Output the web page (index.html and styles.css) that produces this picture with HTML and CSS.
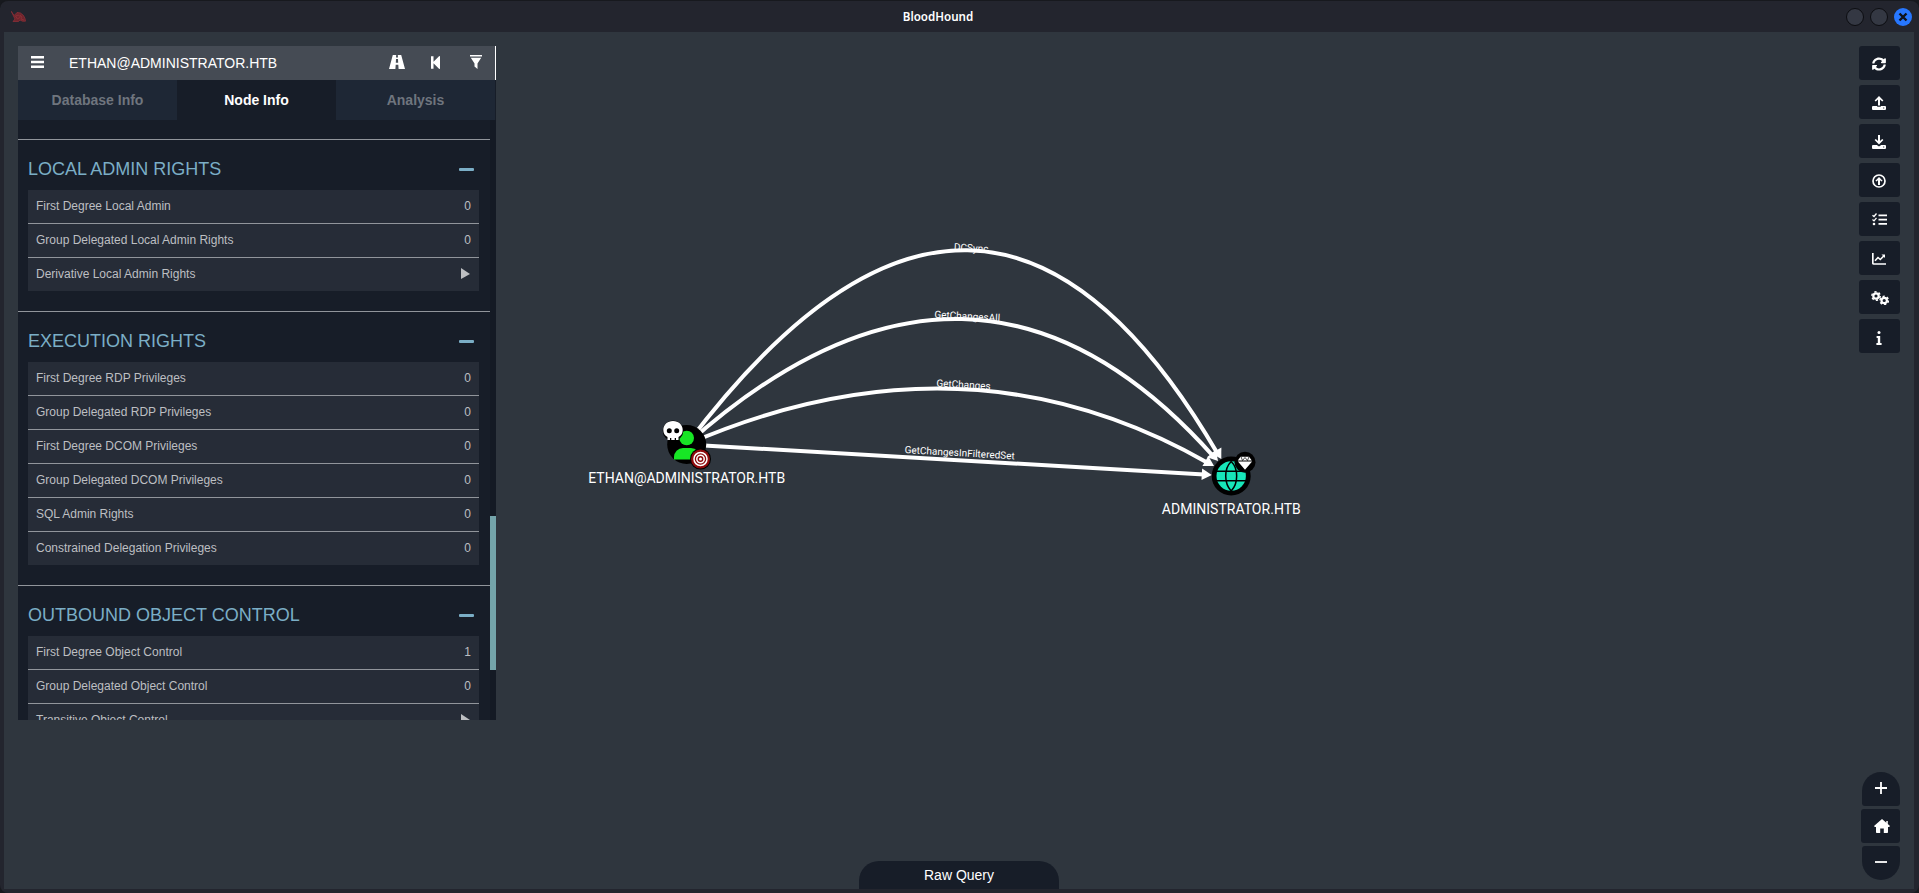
FILE: index.html
```html
<!DOCTYPE html>
<html lang="en">
<head>
<meta charset="utf-8">
<title>BloodHound</title>
<link rel="stylesheet" href="styles.css">
</head>
<body>
<div class="window">
  <header class="titlebar">
    <svg class="app-icon" viewBox="0 0 15 12" width="15" height="12"><path fill="#6e252c" d="M.3.3 1.500 2.500 3.500 4.200 6 1.500l3.500.5 3 2.500 1.500 3 .5 2.700h-3L9 9 7.500 10.500H2L4 8 2.500 5z"/><path d="M4.500 5l3-1 2 2-3 2zM9 4l2 2-1 2 3 1"/></svg>
    <span class="title">BloodHound</span>
    <div class="window-buttons">
      <i></i><i></i><i class="close"><svg viewBox="0 0 18 18" width="18" height="18"><path d="M5.500 5.500l7 7M12.500 5.500l-7 7"/></svg></i>
    </div>
  </header>
  <main class="canvas">
    <svg class="graph" viewBox="4 32 1910 857" width="1910" height="857">
      <g class="edges">
        <path d="M686.700 444.500Q983 51 1218 454.300"/>
        <path d="M686.700 444.500Q973.500 187.500 1213.500 456.500"/>
        <path d="M686.700 444.500Q964 324 1208 463"/>
        <path d="M686.700 444.500 1204 474.500"/>
      </g>
      <g class="arrows">
        <path transform="translate(1221.300 459)rotate(60.200)" d="M0 0-10-5.800V5.800z"/>
        <path transform="translate(1218 461)rotate(49)" d="M0 0-10-5.800V5.800z"/>
        <path transform="translate(1214 466)rotate(30.400)" d="M0 0-10-5.800V5.800z"/>
        <path transform="translate(1211.800 474.900)rotate(3.300)" d="M0 0-10-5.800V5.800z"/>
      </g>
      <g class="edge-labels">
        <text transform="translate(971 251.300)rotate(3.300)">DCSync</text>
        <text transform="translate(967 319.600)rotate(3.300)">GetChangesAll</text>
        <text transform="translate(963.300 388)rotate(3.300)">GetChanges</text>
        <text transform="translate(959.500 456.200)rotate(3.300)">GetChangesInFilteredSet</text>
      </g>
      <g>
        <circle cx="686.700" cy="444.500" r="19.500"/>
        <circle cx="686.700" cy="438" r="7.300" fill="#17e625"/>
        <path d="M674 459.500v-2.500a9 9 0 0 1 9-9h8a9 9 0 0 1 9 9v2.500z" fill="#17e625"/>
        <circle cx="673" cy="430.700" r="10.300"/>
        <path fill="#fff" d="M673 421c-5.800 0-9.700 3.900-9.700 8.900 0 3.100 1.500 5.600 4.200 7.100v3h2.500v-2h1.300v2h3.400v-2h1.300v2h2.500v-3c2.700-1.500 4.200-4 4.200-7.100 0-5-3.900-8.900-9.700-8.900z"/>
        <circle cx="669.300" cy="430.700" r="2.500"/><circle cx="676.700" cy="430.700" r="2.500"/>
        <circle cx="700.500" cy="459" r="10.500"/>
        <circle cx="700.500" cy="459" r="9.500" fill="#8e0a0c"/>
        <g fill="none" stroke="#fff" stroke-width="1.500"><circle cx="700.500" cy="459" r="6.500"/><circle cx="700.500" cy="459" r="3.700"/></g>
        <circle cx="700.500" cy="459" r="1.500" fill="#fff"/>
      </g>
      <g>
        <circle cx="1231.200" cy="476" r="19.500"/>
        <circle cx="1231.200" cy="476" r="14.700" fill="#17e6b9"/>
        <path d="M1216 471.200h30.500M1216 480.800h30.500M1231.200 461.500c-7.300 7-7.300 22 0 29.500M1231.200 461.500c7.300 7 7.300 22 0 29.500" fill="none" stroke="#000" stroke-width="1.500"/>
        <circle cx="1245" cy="462.200" r="10.500"/>
        <path d="M1240.500 456.800h8.600l2.700 3.700h-14zM1237.900 461.600h14.200l-7.100 8.200z" fill="#fff"/>
        <path d="M1241 456.800l1.500 3.700 2.500-3 2.500 3 1.500-3.700" fill="none" stroke="#000" stroke-width=".7"/>
      </g>
      <g class="node-labels">
        <text x="686.700" y="483.200" textLength="197">ETHAN@ADMINISTRATOR.HTB</text>
        <text x="1231.300" y="514" textLength="139">ADMINISTRATOR.HTB</text>
      </g>
    </svg>

    <aside class="panel">
      <div class="search">
        <svg class="menu" viewBox="0 0 13 12" width="13" height="12"><path d="M0 0h13v2.500H0zM0 4.700h13v2.500H0zM0 9.500h13V12H0z"/></svg>
        <span class="query">ETHAN@ADMINISTRATOR.HTB</span>
        <svg class="road" viewBox="0 0 16 14" width="16" height="14"><path d="M3.800 0H7.200L7 2.500H9L8.800 0h3.400L16 14H9.600L9.300 9.800H6.700L6.400 14H0zM7 4 6.800 7.800h2.400L9 4z"/></svg>
        <svg class="back" viewBox="0 0 9 13" width="9" height="13"><path d="M0 .3h2.500v5.500L8 .3Q9-.3 9 .8v11.400q0 1.100-1 .5L2.500 7.200v5.500H0z"/></svg>
        <svg class="filter" viewBox="0 0 12 14" width="12" height="14"><path d="M0 0h12v1.600H0zM.8 2.700h10.400L7.500 8.500V14L4.500 11.500v-3z"/></svg>
      </div>
      <nav class="tabs"><span>Database Info</span><span class="active">Node Info</span><span>Analysis</span></nav>
      <div class="scroll">
        <div class="sections">
          <section>
            <h4>LOCAL ADMIN RIGHTS <i></i></h4>
            <ul>
              <li>First Degree Local Admin<b>0</b></li>
              <li>Group Delegated Local Admin Rights<b>0</b></li>
              <li>Derivative Local Admin Rights<i class="play"></i></li>
            </ul>
          </section>
          <section>
            <h4>EXECUTION RIGHTS <i></i></h4>
            <ul>
              <li>First Degree RDP Privileges<b>0</b></li>
              <li>Group Delegated RDP Privileges<b>0</b></li>
              <li>First Degree DCOM Privileges<b>0</b></li>
              <li>Group Delegated DCOM Privileges<b>0</b></li>
              <li>SQL Admin Rights<b>0</b></li>
              <li>Constrained Delegation Privileges<b>0</b></li>
            </ul>
          </section>
          <section>
            <h4>OUTBOUND OBJECT CONTROL <i></i></h4>
            <ul>
              <li>First Degree Object Control<b>1</b></li>
              <li>Group Delegated Object Control<b>0</b></li>
              <li>Transitive Object Control<i class="play"></i></li>
            </ul>
          </section>
        </div>
        <div class="track"><div class="thumb"></div></div>
      </div>
    </aside>

    <div class="raw-query">Raw Query</div>

    <div class="side">
      <div class="tools">
        <button><svg viewBox="0 0 512 512" width="14" height="14"><path d="M371 142c-31-30-71-46-115-46-79 0-147 54-166 129-1 5-6 9-12 9H21c-8 0-13-7-12-14C30 104 133 16 256 16c67 0 129 26 175 70l36-36c15-15 41-5 41 17v133c0 13-11 24-24 24H351c-22 0-32-26-17-41zM28 288h133c22 0 32 26 17 41l-37 41c31 30 71 46 115 46 79 0 147-54 166-129 1-5 6-9 12-9h57c8 0 13 7 12 14-21 116-124 204-247 204-67 0-129-26-175-70l-36 36c-15 15-41 5-41-17V312c0-13 11-24 24-24z"/></svg></button>
        <button><svg viewBox="0 0 14 14" width="14" height="14"><path fill-rule="evenodd" d="M6 9.500v-6L3.800 5.600 2.600 4.400 7 0l4.400 4.400-1.200 1.200L8 3.500v6zM1 10h4.200v.8h3.600V10H13q1 0 1 1v2q0 1-1 1H1q-1 0-1-1v-2q0-1 1-1zM11.200 11.500v1h1v-1z"/></svg></button>
        <button><svg viewBox="0 0 14 14" width="14" height="14"><path fill-rule="evenodd" d="M6 0h2v6l2.200-2.100 1.200 1.200L7 9.500 2.600 5.100l1.200-1.200L6 6zM1 10h3.800L7 11.500 9.200 10H13q1 0 1 1v2q0 1-1 1H1q-1 0-1-1v-2q0-1 1-1zM11.200 11.500v1h1v-1z"/></svg></button>
        <button><svg viewBox="0 0 14 14" width="14" height="14"><circle cx="7" cy="7" r="6" fill="none" stroke="#fff" stroke-width="1.700"/><path d="M7 3l3.600 3.700-1 .9L8 6.300V11H6V6.300L4.400 7.600l-1-.9z"/></svg></button>
        <button><svg viewBox="0 0 15 13" width="15" height="13"><path d="M6.500 1.500H15v1.800H6.500zM6.500 5.700H15v1.800H6.500zM6.500 10H15v1.800H6.500z"/><circle cx="2" cy="11" r="1.300"/><path d="M.5 2.200 2 3.500 4.500.5M.5 6.600 2 7.900l2.500-3" fill="none" stroke="#fff" stroke-width="1.300"/></svg></button>
        <button><svg class="chart" viewBox="0 0 14 12" width="14" height="12"><path d="M.8 0v10q0 1 1 1H14" fill="none" stroke="#fff" stroke-width="1.700"/><path d="M3 7.800 6 4.500l2.300 2L12 2.800" fill="none" stroke="#fff" stroke-width="1.600"/><path d="M9.500 1.500H13V5z"/></svg></button>
        <button><svg class="cogs" viewBox="0 0 18 14" width="18" height="14"><g fill="none" stroke="#fff"><circle cx="5" cy="5" r="2.700" stroke-width="2.200"/><circle cx="5" cy="5" r="4.200" stroke-width="1.500" stroke-dasharray="2.200 2.198"/><circle cx="13.200" cy="9.500" r="2.700" stroke-width="2.200"/><circle cx="13.200" cy="9.500" r="4.200" stroke-width="1.500" stroke-dasharray="2.200 2.198"/></g></svg></button>
        <button><svg class="info" viewBox="0 0 6 14" width="6" height="14"><circle cx="3" cy="1.500" r="1.500"/><path d="M.6 5H4.200v7H5.600v2H.4v-2H1.800V7H.6z"/></svg></button>
      </div>
      <div class="zoom">
        <button class="in"><svg viewBox="0 0 12 12" width="12" height="12"><path d="M5.100 0h1.800v5.100H12v1.800H6.900V12H5.100V6.900H0V5.100h5.100z"/></svg></button>
        <button class="home"><svg viewBox="0 0 16 14" width="16" height="14"><path d="M8 0l4.300 3.700V2h1.500v3L16 7l-.8 1H14v5.200q0 .8-.8.800H9.800V9.500H6.200V14H2.800Q2 14 2 13.200V8H.8L0 7z"/></svg></button>
        <button class="out"><svg viewBox="0 0 12 12" width="12" height="12"><path d="M0 5.100h12v1.800H0z"/></svg></button>
      </div>
    </div>
  </main>
</div>
</body>
</html>
```
FILE: styles.css
```css
* { box-sizing: border-box; }
body {
  margin: 0;
  background: #17191e;
  font-family: "Liberation Sans", Arial, sans-serif;
  overflow: hidden;
}
.window {
  width: 1919px;
  height: 893px;
  padding: 2px 5px 4px 4px;
  background: #23252e;
  border-top: 1px solid #17191e;
  border-radius: 8px;
  display: flex;
  flex-direction: column;
}
.titlebar {
  height: 29px;
  display: grid;
  grid-template-columns: 1fr auto 1fr;
  align-items: center;
}
.app-icon { margin: -1px 0 0 7px; fill: none; stroke: #94303a; stroke-width: .7; }
.title {
  font: 600 11.6px/20px "Noto Sans", sans-serif;
  color: #fff;
  padding-right: 42px;
  margin-top: -1px;
}
.window-buttons { display: flex; gap: 6px; justify-content: flex-end; padding-right: 2px; margin-top: -1px; }
.window-buttons i {
  width: 18px;
  height: 18px;
  border-radius: 50%;
  background: #343843;
  border: 1px solid #0c0d11;
}
.window-buttons .close { background: #2777ff; border: 0; }
.close svg { display: block; stroke: #10131c; stroke-width: 2.4; }

.canvas {
  position: relative;
  flex: 1;
  background: #2f363e;
  display: grid;
  grid-template-columns: 478px 1fr auto;
  padding: 14px 14px 0;
}
.graph { position: absolute; left: 0; top: 0; }
.edges { fill: none; stroke: #fff; stroke-width: 4; }
.arrows { fill: #fff; }
.edge-labels, .node-labels { font-family: Roboto, sans-serif; fill: #fff; text-anchor: middle; }
.edge-labels { font-size: 10px; }
.node-labels { font-size: 14px; }

.panel {
  position: relative;
  height: 674px;
  background: #171d28;
  display: flex;
  flex-direction: column;
}
.search {
  height: 34px;
  background: #454b54;
  border-right: 1px solid #fff;
  display: flex;
  align-items: center;
  padding: 0 13px 2px 13px;
  color: #fff;
  font-size: 14px;
}
.search svg { fill: #fff; display: block; }
.query { flex: 1; padding: 1px 0 0 25px; }
.road { margin-right: 26px; }
.back { margin-right: 30px; }
.tabs { display: flex; height: 40px; padding-right: 1px; }
.tabs span {
  flex: 1;
  background: #1e2735;
  color: #6f757e;
  font: bold 14px/40px "Liberation Sans", Arial, sans-serif;
  text-align: center;
}
.tabs .active { background: #171d28; color: #fff; }
.scroll { display: flex; flex: 1; min-height: 0; overflow: hidden; }
.sections { flex: 1; padding-top: 19px; }
section { border-top: 1px solid #91959b; padding: 0 11px 20px 10px; }
h4 {
  margin: 0;
  height: 50px;
  font-weight: normal;
  font-size: 18px;
  line-height: 59px;
  color: #7baec6;
  display: flex;
  justify-content: space-between;
}
h4 i { width: 15px; height: 2.6px; background: #7baec6; border-radius: 1px; margin: 28px 5px 0 0; }
ul { margin: 0; padding: 0; list-style: none; }
li {
  height: 34px;
  padding: 0 8px 2px;
  background: #262c37;
  border-bottom: 1px solid #91959b;
  color: #bdbfc2;
  font-size: 12px;
  display: flex;
  align-items: center;
  justify-content: space-between;
}
li:last-child { height: 33px; border: 0; }
li b { font-weight: normal; }
.play {
  border-left: 9px solid #bdbfc2;
  border-top: 5.5px solid transparent;
  border-bottom: 5.5px solid transparent;
  border-top-width: 6px;
  margin-right: 1px;
}
.track { width: 6px; background: #141a24; padding-top: 396px; }
.thumb { height: 154px; background: #74a4aa; }

.raw-query {
  position: absolute;
  left: 855px;
  bottom: 0;
  width: 200px;
  height: 28px;
  border-radius: 20px 20px 0 0;
  background: #171d28;
  color: #fff;
  font-size: 14px;
  line-height: 28px;
  text-align: center;
}
.side {
  grid-column: 3;
  position: relative;
  display: flex;
  flex-direction: column;
  justify-content: space-between;
  padding-bottom: 9px;
}
.tools, .zoom { display: flex; flex-direction: column; align-items: flex-end; }
.tools { gap: 5px; }
.zoom { gap: 3px; }
button {
  width: 41px;
  height: 34px;
  padding: 0;
  border: 0;
  border-radius: 3px;
  background: #171d28;
  display: flex;
  align-items: center;
  justify-content: center;
}
button svg { fill: #fff; display: block; }
.tools button { padding: 1px 1px 0 0; }
.chart { margin-top: 1px; }
.cogs { margin-left: 2px; }
.info { margin-top: 2px; }
.zoom button { width: 38px; }
.zoom .home { width: 39px; padding-left: 3px; }
.zoom .in { border-radius: 19px 19px 3px 3px; padding-bottom: 2px; }
.zoom .out { border-radius: 3px 3px 19px 19px; padding-bottom: 2px; }
```
